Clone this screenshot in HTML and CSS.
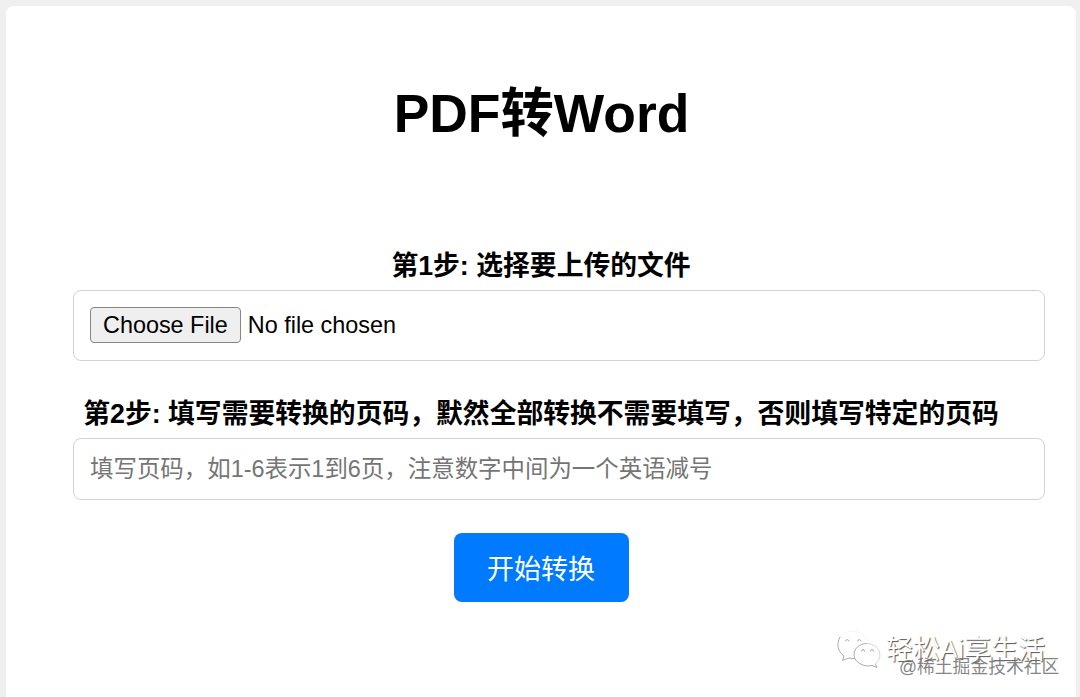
FILE: index.html
```html
<!DOCTYPE html>
<html lang="zh-CN">
<head>
<meta charset="utf-8">
<title>PDF转Word</title>
<link rel="stylesheet" href="styles.css">
</head>
<body>
<main class="card">
  <h1 class="title">PDF转Word</h1>
  <form class="form">
    <label class="label" for="file">第1步: 选择要上传的文件</label>
    <input class="field field-file" type="file" id="file">
    <label class="label" for="pages">第2步: 填写需要转换的页码，默然全部转换不需要填写，否则填写特定的页码</label>
    <input class="field field-text" type="text" id="pages" placeholder="填写页码，如1-6表示1到6页，注意数字中间为一个英语减号">
    <button class="submit" type="button">开始转换</button>
  </form>
  <div class="brand">
    <svg class="brand-icon" viewBox="0 0 44 40" fill="none">
      <g stroke="#a0a0a0" stroke-width="0.9" stroke-linecap="round">
        <path d="M3 8C-1 15 1 23 7 27L5.500 31.500L12 29C14 29.500 15.500 29.700 17.500 29.500"/>
        <path d="M4 7C10 0 24 0 29 10" stroke="#f2f2f2"/>
        <path d="M8.500 12A1.800 1.800 0 0 1 12 12M20.500 12A1.800 1.800 0 0 1 24 12"/>
        <path d="M30 14.500C22 14.500 17 20 17 25.500C17 33.500 27 38.500 35 36.500L40 38.500L38.500 35" />
        <path d="M30 14.500C43 15 47 28 38.500 35" stroke="#d2d2d2"/>
        <path d="M24.500 22A1.500 1.500 0 0 1 27.500 22M33.500 22A1.500 1.500 0 0 1 36.500 22"/>
      </g>
    </svg>
    <span class="brand-name">轻松Ai享生活</span>
  </div>
  <div class="community">@稀土掘金技术社区</div>
</main>
</body>
</html>
```

FILE: styles.css
```css
* { box-sizing: border-box; }

body {
  margin: 0;
  height: 697px;
  overflow: hidden;
  padding: 6px 4px 0 6px;
  background: #f0f0f0;
  font-family: "Liberation Sans", "Noto Sans CJK SC", sans-serif;
  color: #000;
}

.card {
  position: relative;
  height: 710px;
  padding: 68px 33px 0 67px;
  border-radius: 8px;
  background: #fff;
}

.title {
  margin: 0 33px 91px 0;
  font-size: 53.4px;
  line-height: 80px;
  text-align: center;
}

.form {
  display: flex;
  flex-direction: column;
}

.label {
  height: 45px;
  margin-right: 34px;
  font-size: 26.8px;
  font-weight: bold;
  line-height: 42px;
  text-align: center;
  white-space: nowrap;
}

.field {
  width: 972px;
  margin: 0 0 32px;
  padding: 16px;
  border: 1px solid #d3d3d3;
  border-radius: 8px;
  background: #fff;
  color: #000;
  font-family: inherit;
  font-size: 23.4px;
}

.field-file {
  height: 71px;
}

.field-file::file-selector-button {
  height: 36px;
  margin: 0 7px 0 0;
  padding: 0 12px;
  border: 1px solid #858585;
  border-radius: 4px;
  background: #efefef;
  color: #000;
  font: inherit;
}

.field-text {
  height: 62px;
  font-size: 23.45px;
}

.field-text::placeholder {
  color: #757575;
}

.submit {
  align-self: center;
  width: 175px;
  height: 69px;
  margin: 1px 34px 0 0;
  padding: 0;
  border: 0;
  border-radius: 8px;
  background: #007bff;
  color: #fff;
  font-family: inherit;
  font-size: 27px;
}

.brand {
  position: absolute;
  top: 623px;
  left: 831px;
  display: flex;
  gap: 5px;
}

.brand-icon {
  width: 44px;
  height: 40px;
}

.brand-name {
  font-size: 27px;
  line-height: 42px;
  color: #fff;
  text-shadow: 1px 1px 1px #555;
  white-space: nowrap;
}

.community {
  position: absolute;
  top: 648px;
  left: 893px;
  font-size: 17.8px;
  line-height: 26px;
  color: rgba(110, 110, 110, 0.85);
  white-space: nowrap;
}
```
